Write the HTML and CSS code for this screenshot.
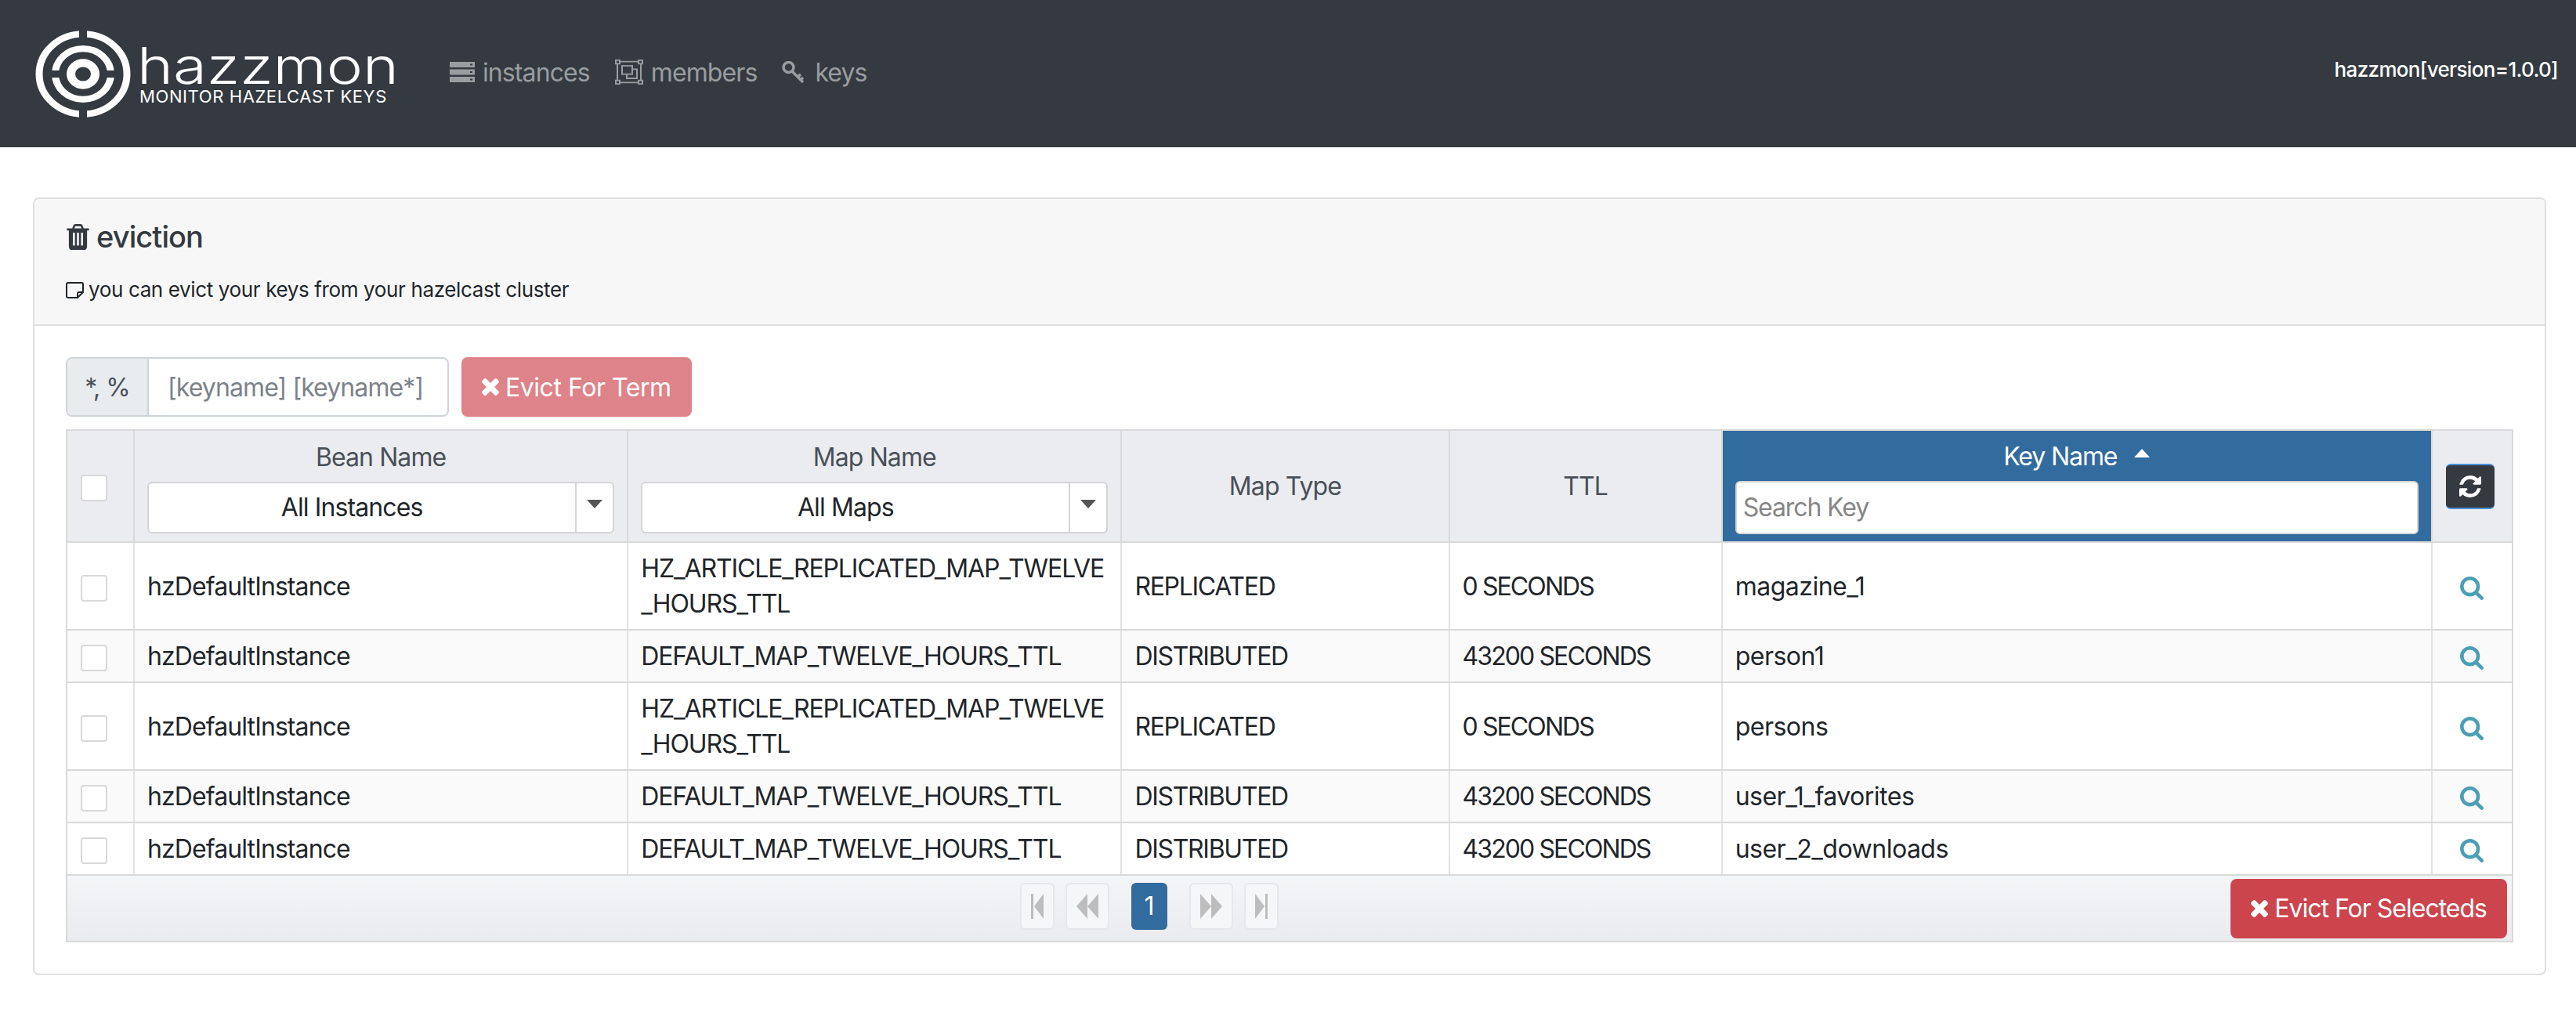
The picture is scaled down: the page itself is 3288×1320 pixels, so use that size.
FILE: index.html
```html
<!DOCTYPE html>
<html>

<head>
  <meta charset="UTF-8">
  <title>hazzmon</title>
  <link rel="stylesheet" href="styles.css">
</head>

<body>
  <header class="topbar">
    <div class="logo">
      <svg class="logo-mark" width="124" height="113" viewBox="-62 -62 124 124" preserveAspectRatio="none" fill="none" stroke="#fff">
        <circle r="56" stroke-width="9"></circle>
        <circle r="35.5" stroke-width="9"></circle>
        <circle r="15.5" stroke-width="11"></circle>
        <rect x="-5" y="-62" width="10" height="14" fill="#343a40" stroke="none"></rect>
        <rect x="-5" y="48" width="10" height="14" fill="#343a40" stroke="none"></rect>
        <rect x="-45" y="-5" width="15" height="10" fill="#343a40" stroke="none"></rect>
        <rect x="30" y="-5" width="15" height="10" fill="#343a40" stroke="none"></rect>
      </svg>
      <div class="logo-text">
        <div class="logo-name">hazzmon</div>
        <div class="logo-sub">MONITOR HAZELCAST KEYS</div>
      </div>
    </div>
    <nav class="nav">
      <a href="#" class="nav-link">
        <svg width="32" height="26" viewBox="0 0 32 26" fill="#9a9d9f">
          <path fill-rule="evenodd" d="M0 0h32v7H0zM26 2.5v2h3v-2zM0 9.5h32v7H0zM26 12v2h3v-2zM0 19h32v7H0zM26 21.5v2h3v-2z"></path>
        </svg>
        instances
      </a>
      <a href="#" class="nav-link">
        <svg width="36" height="32" viewBox="0 0 36 36" preserveAspectRatio="none" fill="none" stroke="#9a9d9f" stroke-width="2">
          <path d="M6 3h24M6 33h24M3 6v24M33 6v24"></path>
          <rect x="1" y="1" width="5" height="5"></rect>
          <rect x="30" y="1" width="5" height="5"></rect>
          <rect x="1" y="30" width="5" height="5"></rect>
          <rect x="30" y="30" width="5" height="5"></rect>
          <rect x="9" y="9" width="13" height="12"></rect>
          <path d="M22 14h6v13H15v-6"></path>
        </svg>
        members
      </a>
      <a href="#" class="nav-link nav-keys">
        <svg width="30" height="28" viewBox="0 0 30 28" fill="none" stroke="#9a9d9f" stroke-width="3.5">
          <circle cx="8.5" cy="8" r="6.5"></circle>
          <path d="M13 13l14 14M20 20l4-3M24 24l3-3"></path>
        </svg>
        keys
      </a>
    </nav>
    <div class="version">hazzmon[version=1.0.0]</div>
  </header>

  <main class="content">
    <section class="card">
      <div class="card-header">
        <h5 class="card-title">
          <svg class="fa" width="31" height="33" viewBox="128 128 1536 1536" preserveAspectRatio="none" fill="#343a40">
            <path d="M704 1376v-704q0-14-9-23t-23-9h-64q-14 0-23 9t-9 23v704q0 14 9 23t23 9h64q14 0 23-9t9-23zm256 0v-704q0-14-9-23t-23-9h-64q-14 0-23 9t-9 23v704q0 14 9 23t23 9h64q14 0 23-9t9-23zm256 0v-704q0-14-9-23t-23-9h-64q-14 0-23 9t-9 23v704q0 14 9 23t23 9h64q14 0 23-9t9-23zm-544-992h448l-48-117q-7-9-17-11h-317q-10 2-17 11zm928 32v64q0 14-9 23t-23 9h-96v948q0 83-47 143.5t-113 60.5h-832q-66 0-113-58.5t-47-141.5v-952h-96q-14 0-23-9t-9-23v-64q0-14 9-23t23-9h309l70-167q15-37 54-63t79-26h320q40 0 79 26t54 63l70 167h309q14 0 23 9t9 23z"></path>
          </svg>
          eviction
        </h5>
        <p class="card-sub">
          <svg width="23" height="21" viewBox="0 0 23 21" fill="none" stroke="#212529" stroke-width="2">
            <path d="M3 1h17q2 0 2 2v10l-7 7H3q-2 0-2-2V3q0-2 2-2zM22 13h-5q-2 0-2 2v5"></path>
          </svg>
          you can evict your keys from your hazelcast cluster
        </p>
      </div>

      <div class="card-body">
        <div class="term-row">
          <div class="input-group">
            <span class="addon">*, %</span>
            <span class="term-input">[keyname] [keyname*]</span>
          </div>
          <button class="btn btn-danger btn-faded">
            <svg class="fa" width="22" height="22" viewBox="302 366 1188 1188" fill="#fff"><use href="#i-times"></use></svg>
            Evict For Term
          </button>
        </div>

        <div class="grid">
          <table class="keys">
            <colgroup>
              <col class="c-check">
              <col class="c-name">
              <col class="c-name">
              <col class="c-type">
              <col class="c-ttl">
              <col class="c-key">
              <col class="c-action">
            </colgroup>
            <thead>
              <tr>
                <th class="th-check"><span class="check"></span></th>
                <th>
                  <div class="th-label">Bean Name</div>
                  <div class="select"><span class="select-text">All Instances</span><span class="select-arrow"></span></div>
                </th>
                <th>
                  <div class="th-label">Map Name</div>
                  <div class="select"><span class="select-text">All Maps</span><span class="select-arrow"></span></div>
                </th>
                <th>Map Type</th>
                <th>TTL</th>
                <th class="sorted">
                  <div class="th-label">Key Name<span class="sort-up"></span></div>
                  <div class="search">Search Key</div>
                </th>
                <th class="th-refresh">
                  <button class="refresh">
                    <svg width="28" height="28" viewBox="128 128 1536 1536" preserveAspectRatio="none" fill="#fff"><use href="#i-refresh"></use></svg>
                  </button>
                </th>
              </tr>
            </thead>
            <tbody id="rows"></tbody>
          </table>

          <div class="grid-footer">
            <div class="pager">
              <span class="page-btn page-edge"><svg width="16" height="32" viewBox="0 0 16 32" fill="#bdbdbd"><path d="M0 0h3v32H0zM16 0v32L4 16z"></path></svg></span>
              <span class="page-btn"><svg width="28" height="32" viewBox="0 0 28 32" fill="#bdbdbd"><path d="M14 0v32L0 16zM28 0v32L14 16z"></path></svg></span>
              <span class="page-current">1</span>
              <span class="page-btn"><svg width="28" height="32" viewBox="0 0 28 32" fill="#bdbdbd"><path d="M0 0v32l14-16zM14 0v32l14-16z"></path></svg></span>
              <span class="page-btn page-edge"><svg width="16" height="32" viewBox="0 0 16 32" fill="#bdbdbd"><path d="M0 0v32l12-16zM13 0h3v32h-3z"></path></svg></span>
            </div>
            <button class="btn btn-danger btn-selected">
              <svg class="fa" width="22" height="22" viewBox="302 366 1188 1188" fill="#fff"><use href="#i-times"></use></svg>
              Evict For Selecteds
            </button>
          </div>
        </div>
      </div>
    </section>
  </main>

  <svg class="defs" width="0" height="0">
    <defs>
      <path id="i-times" d="M1490 1322q0 40-28 68l-136 136q-28 28-68 28t-68-28l-294-294-294 294q-28 28-68 28t-68-28l-136-136q-28-28-28-68t28-68l294-294-294-294q-28-28-28-68t28-68l136-136q28-28 68-28t68 28l294 294 294-294q28-28 68-28t68 28l136 136q28 28 28 68t-28 68l-294 294 294 294q28 28 28 68z"></path>
      <path id="i-refresh" d="M1639 1056q0 5-1 7-64 268-268 434.5t-478 166.5q-146 0-282.5-55t-243.5-157l-129 129q-19 19-45 19t-45-19-19-45v-448q0-26 19-45t45-19h448q26 0 45 19t19 45-19 45l-137 137q71 66 161 102t187 36q134 0 250-65t186-179q11-17 53-117 8-23 30-23h192q13 0 22.5 9.5t9.5 22.5zm25-800v448q0 26-19 45t-45 19h-448q-26 0-45-19t-19-45 19-45l138-138q-148-137-349-137-134 0-250 65t-186 179q-11 17-53 117-8 23-30 23h-199q-13 0-22.5-9.5t-9.5-22.5v-7q65-268 270-434.5t480-166.5q146 0 284 55.5t245 156.5l130-129q19-19 45-19t45 19 19 45z"></path>
      <path id="i-search" d="M1216 832q0-185-131.5-316.5t-316.5-131.5-316.5 131.5-131.5 316.5 131.5 316.5 316.5 131.5 316.5-131.5 131.5-316.5zm512 832q0 52-38 90t-90 38q-54 0-90-38l-343-342q-179 124-399 124-143 0-273.5-55.5t-225-150-150-225-55.5-273.5 55.5-273.5 150-225 225-150 273.5-55.5 273.5 55.5 225 150 150 225 55.5 273.5q0 220-124 399l343 343q37 37 37 90z"></path>
    </defs>
  </svg>

  <script>
    // Table rows
    const longMap = "HZ_ARTICLE_REPLICATED_MAP_TWELVE<br>_HOURS_TTL";
    const shortMap = "DEFAULT_MAP_TWELVE_HOURS_TTL";
    const rows = [
      [longMap, "REPLICATED", "0 SECONDS", "magazine_1"],
      [shortMap, "DISTRIBUTED", "43200 SECONDS", "person1"],
      [longMap, "REPLICATED", "0 SECONDS", "persons"],
      [shortMap, "DISTRIBUTED", "43200 SECONDS", "user_1_favorites"],
      [shortMap, "DISTRIBUTED", "43200 SECONDS", "user_2_downloads"]
    ];

    const tbody = document.getElementById("rows");
    rows.forEach((row) => {
      const tr = document.createElement("tr");
      tr.innerHTML =
        '<td class="cell-check"><span class="check"></span></td>' +
        '<td>hzDefaultInstance</td>' +
        '<td class="cell-map">' + row[0] + '</td>' +
        '<td class="cell-type">' + row[1] + '</td>' +
        '<td class="cell-ttl">' + row[2] + '</td>' +
        '<td class="cell-key">' + row[3] + '</td>' +
        '<td class="cell-center"><svg width="30" height="30" viewBox="64 128 1664 1664" fill="#4a9fb5"><use href="#i-search"></use></svg></td>';
      tbody.appendChild(tr);
    });
  </script>
</body>

</html>
```

FILE: styles.css
```css
body {
  margin: 0;
  font-family: Inter, Roboto, sans-serif;
  font-size: 32px;
  letter-spacing: -0.9px;
  color: #212529;
  background-color: #fff;
}

svg {
  display: inline-block;
  flex-shrink: 0;
}

.defs {
  display: block;
  height: 0;
}

/* Top bar */
.topbar {
  height: 188px;
  background-color: #343a40;
  display: flex;
  align-items: center;
  padding: 0 23px 0 44px;
}

.logo {
  display: flex;
  align-items: center;
  gap: 7px;
  width: 530px;
}

.logo-text {
  color: #fff;
  padding-top: 6px;
}

.logo-name {
  font-size: 64px;
  font-weight: 300;
  line-height: 52px;
  letter-spacing: 0;
  transform: scaleX(1.22);
  transform-origin: left;
}

.logo-sub {
  margin-left: 3px;
  font-size: 22px;
  line-height: 26px;
  letter-spacing: 0.6px;
  white-space: nowrap;
}

.nav {
  display: flex;
  align-items: center;
  gap: 32px;
  flex: 1;
  margin-bottom: 4px;
}

.nav-link {
  display: flex;
  align-items: center;
  gap: 10px;
  color: #9a9d9f;
  text-decoration: none;
}

.nav-keys {
  gap: 12px;
}

.version {
  color: #fff;
  font-size: 26px;
  font-weight: 500;
  letter-spacing: -0.67px;
  margin-bottom: 12px;
}

/* Card */
.content {
  padding: 64px 38px 0 42px;
}

.card {
  border: 2px solid #dfdfdf;
  border-radius: 8px;
}

.card-header {
  height: 160px;
  padding: 0 40px;
  background-color: #f7f7f7;
  border-bottom: 2px solid #dfdfdf;
  border-radius: 6px 6px 0 0;
  display: flex;
  flex-direction: column;
}

.card-title {
  margin: 24px 0 0;
  font-size: 38px;
  line-height: 48px;
  font-weight: 500;
  letter-spacing: -0.9px;
  color: #343a40;
  display: flex;
  align-items: center;
  gap: 8px;
}

.card-sub {
  margin: 26px 0 0;
  font-size: 26px;
  line-height: 36px;
  letter-spacing: -0.37px;
  display: flex;
  align-items: center;
  gap: 6px;
}

.card-body {
  padding: 40px;
}

/* Term search */
.term-row {
  display: flex;
  gap: 16px;
  margin-bottom: 16px;
}

.input-group {
  display: flex;
  width: 489px;
  height: 76px;
  box-sizing: border-box;
  border: 2px solid #ced4da;
  border-radius: 8px;
  overflow: hidden;
}

.addon {
  width: 102px;
  background-color: #e9ecef;
  border-right: 2px solid #ced4da;
  display: flex;
  align-items: center;
  justify-content: center;
  color: #495057;
}

.term-input {
  flex: 1;
  display: flex;
  align-items: center;
  padding-left: 24px;
  color: #7b838a;
  white-space: nowrap;
}

.btn {
  height: 76px;
  border: none;
  border-radius: 8px;
  padding: 0 26px;
  font: inherit;
  letter-spacing: -0.45px;
  color: #fff;
  display: flex;
  align-items: center;
  gap: 8px;
}

.btn-danger {
  background-color: #cc444c;
}

.btn-faded {
  background-color: #de8389;
}

.btn-selected {
  letter-spacing: -1px;
}

/* Table */
.grid {
  border: 2px solid #d9d9d9;
}

.keys {
  width: 100%;
  table-layout: fixed;
  border-collapse: collapse;
  line-height: 45px;
}

.c-check { width: 85px; }
.c-name { width: 630px; }
.c-type { width: 418px; }
.c-ttl { width: 348px; }
.c-key { width: 906px; }
.c-action { width: 102px; }

.keys th {
  height: 141px;
  padding: 0 16px;
  background-color: #ebecf0;
  border-left: 2px solid #d9d9d9;
  border-bottom: 2px solid #d9d9d9;
  font-weight: 400;
  color: #495057;
  text-align: center;
  vertical-align: middle;
}

.keys th:first-child,
.keys td:first-child {
  border-left: none;
}

.keys td {
  padding: 10px 16px;
  border-left: 2px solid #e2e2e2;
  border-bottom: 2px solid #d9d9d9;
  white-space: nowrap;
}

.keys .cell-map { letter-spacing: -1.1px; }
.keys .cell-type { letter-spacing: -1.3px; }
.keys .cell-ttl { letter-spacing: -1.9px; }
.keys .cell-key { letter-spacing: -0.5px; }

.keys tbody tr:nth-child(even) td {
  background-color: #fafafa;
}

.keys td.cell-center {
  padding: 0 1px 0 0;
  text-align: center;
  vertical-align: middle;
}

.keys td.cell-check,
.keys th.th-check {
  padding: 0 0 0 17px;
  text-align: left;
  vertical-align: middle;
}

.keys td.cell-center svg {
  vertical-align: middle;
}

.check {
  display: inline-block;
  width: 34px;
  height: 34px;
  box-sizing: border-box;
  background-color: #fff;
  border: 2px solid #d9d9d9;
  border-radius: 4px;
  vertical-align: middle;
}

.th-label {
  line-height: 46px;
  margin-bottom: 8px;
}

.select {
  display: flex;
  height: 66px;
  box-sizing: border-box;
  background-color: #fff;
  border: 2px solid #d5d5d5;
  border-radius: 6px;
  color: #212529;
  align-items: center;
}

.select-text {
  flex: 1;
  padding-right: 26px;
}

.select-arrow {
  width: 48px;
  height: 100%;
  box-sizing: border-box;
  border-left: 2px solid #d5d5d5;
  display: flex;
  align-items: center;
  justify-content: center;
}

.select-arrow::after {
  content: "";
  border-left: 10px solid transparent;
  border-right: 10px solid transparent;
  border-top: 11px solid #555;
  margin-bottom: 8px;
}

.keys th.sorted {
  background-color: #326b9e;
  color: #fff;
  letter-spacing: -1.1px;
}

.sort-up {
  display: inline-block;
  margin-left: 22px;
  margin-bottom: 12px;
  vertical-align: middle;
  border-left: 10px solid transparent;
  border-right: 10px solid transparent;
  border-bottom: 11px solid #fff;
}

.search {
  height: 68px;
  box-sizing: border-box;
  background-color: #fff;
  border: 2px solid #d5d5d5;
  border-radius: 6px;
  color: #868686;
  text-align: left;
  line-height: 64px;
  padding-left: 8px;
}

.keys th.th-refresh {
  padding: 0 4px 0 0;
}

.refresh {
  width: 62px;
  height: 58px;
  padding: 0;
  background-color: #343a40;
  border: none;
  border-top: 2px solid #4a8fd8;
  border-bottom: 2px solid #4a8fd8;
  border-radius: 6px;
  display: inline-flex;
  align-items: center;
  justify-content: center;
  vertical-align: middle;
}

/* Footer with pager */
.grid-footer {
  height: 83px;
  display: flex;
  align-items: center;
  padding-right: 6px;
  background: linear-gradient(#f4f5f7, #eaebee);
}

.pager {
  flex: 1;
  display: flex;
  justify-content: center;
  align-items: center;
  gap: 14px;
  margin-bottom: 6px;
}

.page-btn {
  width: 56px;
  height: 60px;
  box-sizing: border-box;
  background-color: #f5f6f8;
  border: 2px solid #e6e7ea;
  border-radius: 6px;
  display: flex;
  align-items: center;
  justify-content: center;
}

.page-edge {
  width: 44px;
}

.page-current {
  width: 46px;
  height: 60px;
  margin: 0 14px;
  background-color: #326b9e;
  border-radius: 6px;
  color: #fff;
  display: flex;
  align-items: center;
  justify-content: center;
}
```
